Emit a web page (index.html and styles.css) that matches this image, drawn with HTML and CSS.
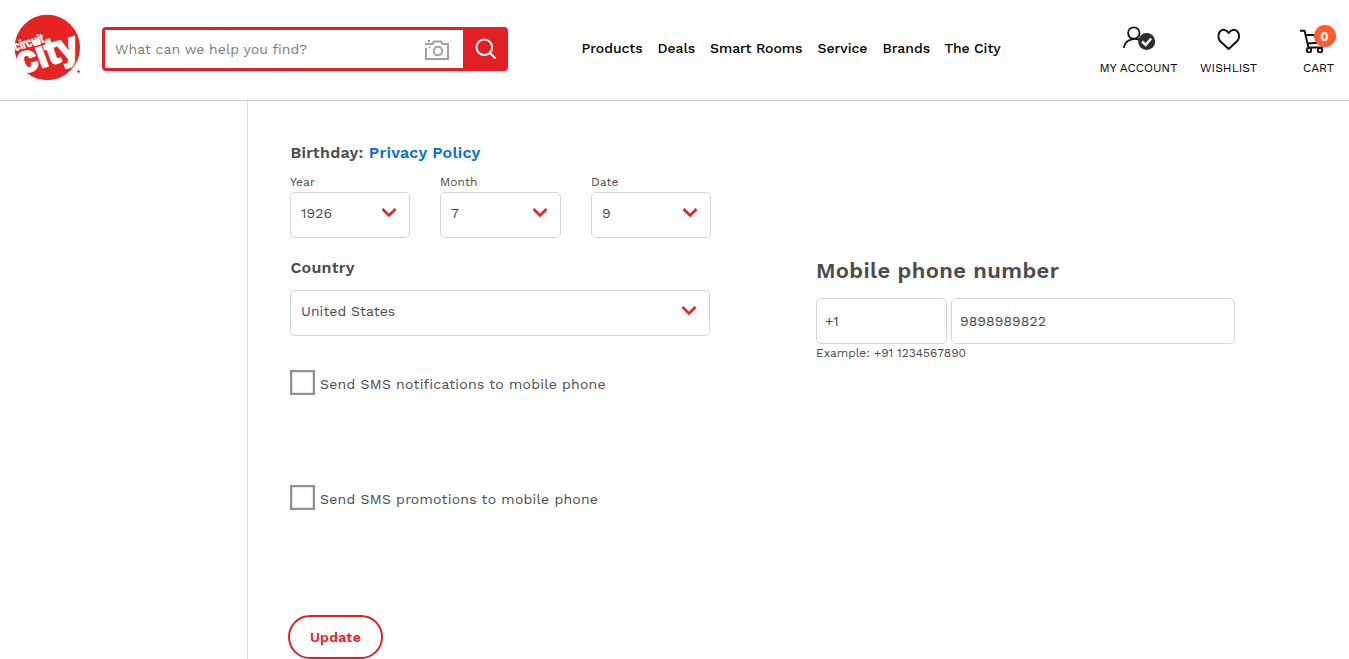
FILE: index.html
```html
<!DOCTYPE html>
<html lang="en">
<head>
<meta charset="utf-8">
<title>Circuit City - My Account</title>
<link rel="stylesheet" href="styles.css">
</head>
<body>
<header class="header">
  <svg class="logo" viewBox="0 0 68 68" role="img" aria-label="Circuit City">
    <circle cx="33.300" cy="33.500" r="32.700" fill="#e52321"/>
    <g fill="#fff" stroke="#fff" font-family="Liberation Sans, sans-serif" font-weight="700">
      <text transform="translate(1.500 37) rotate(-17) scale(.8 1)" font-size="13" stroke-width=".6" textLength="38" lengthAdjust="spacingAndGlyphs">circuit</text>
      <text transform="translate(7 60) rotate(-17) skewX(3) scale(.9 1)" font-size="38" stroke-width="2" textLength="70" lengthAdjust="spacingAndGlyphs">city</text>
    </g>
    <circle cx="64.500" cy="57.500" r="1.300" fill="#e52321"/>
  </svg>
  <form class="search">
    <input class="search-input" type="text" placeholder="What can we help you find?">
    <svg class="camera" viewBox="0 0 26 22" fill="none" stroke="#a0a0a0" stroke-width="2">
      <path d="M2 8V19H24V4H19L17 1.500H10L8.500 4H1M3.500 1H6M5 7.500H6.500"/><circle cx="14" cy="11" r="4.200"/>
    </svg>
    <button class="search-button" type="button" aria-label="Search">
      <svg viewBox="0 0 22 22" fill="none" stroke="#fff" stroke-width="2" stroke-linecap="round"><circle cx="9.300" cy="9.300" r="7.800"/><path d="M15 15L20 20"/></svg>
    </button>
  </form>
  <nav class="nav">
    <a>Products</a><a>Deals</a><a>Smart Rooms</a><a>Service</a><a>Brands</a><a>The City</a>
  </nav>
  <div class="actions">
    <a class="action">
      <svg viewBox="0 0 34 28" fill="none" stroke="#111" stroke-width="1.800"><circle cx="11.800" cy="8" r="5.700"/><path d="M1.800 23C3 13 16 12 20 17"/><circle cx="24.700" cy="16.500" r="8.500" fill="#2d2d2d" stroke="none"/><path d="M20.200 16.500L23.700 20L29.200 13.500" stroke="#fff" stroke-width="2.500"/></svg>
      <span>MY ACCOUNT</span>
    </a>
    <a class="action">
      <svg viewBox="0 0 34 28" fill="none" stroke="#111" stroke-width="2" stroke-linejoin="round"><path d="M16.700 24L8.500 16.500C6 14 5.500 9 8.200 6.200C11 4 14.500 4.500 16.700 8C19 4.500 22.500 4 25.200 6.200C28 9 27.500 14 24.800 16.500Z"/></svg>
      <span>WISHLIST</span>
    </a>
    <a class="action cart">
      <svg viewBox="0 0 34 28" fill="none" stroke="#111" stroke-width="1.900"><path d="M0 5.700H4.500L8.500 22.500H23M5.500 10H23L20.500 17.500L8 18.500"/><circle cx="9" cy="25.200" r="2.200"/><circle cx="20" cy="25.200" r="2.200"/></svg>
      <b class="badge">0</b>
      <span>CART</span>
    </a>
  </div>
</header>
<main class="page">
  <aside class="sidebar"></aside>
  <section class="profile">
    <h2 class="heading">Birthday: <a class="link">Privacy Policy</a></h2>
    <div class="birthday">
      <label class="field">Year<span class="select">1926<svg class="chevron" viewBox="0 0 16 11"><path d="M1.500 2L8 8.500L14.500 2"/></svg></span></label>
      <label class="field">Month<span class="select">7<svg class="chevron" viewBox="0 0 16 11"><path d="M1.500 2L8 8.500L14.500 2"/></svg></span></label>
      <label class="field">Date<span class="select">9<svg class="chevron" viewBox="0 0 16 11"><path d="M1.500 2L8 8.500L14.500 2"/></svg></span></label>
    </div>
    <h2 class="heading country">Country</h2>
    <div class="select">United States<svg class="chevron" viewBox="0 0 16 11"><path d="M1.500 2L8 8.500L14.500 2"/></svg></div>
    <label class="check"><i class="box"></i><span>Send SMS notifications to mobile phone</span></label>
    <label class="check promotions"><i class="box"></i><span>Send SMS promotions to mobile phone</span></label>
    <button class="update" type="button">Update</button>
  </section>
  <section class="mobile">
    <h1 class="title">Mobile phone number</h1>
    <div class="phone"><input class="input" value="+1"><input class="input" value="9898989822"></div>
    <p class="example">Example: +91 1234567890</p>
  </section>
</main>
</body>
</html>
```

FILE: styles.css
```css
* { box-sizing: border-box; }
body { margin: 0; height: 659px; overflow: hidden; background: #fff; color: #4b4b4b; font: 14px "Work Sans", Inter, "Liberation Sans", sans-serif; }
h1, h2, p { margin: 0; }
svg { display: block; }
.header { height: 101px; border-bottom: 1px solid #ccc; display: flex; align-items: flex-start; }
.logo { width: 68px; height: 68px; margin: 14px 0 0 14px; flex: none; overflow: visible; }
.search { width: 406px; height: 44px; margin: 27px 0 0 20px; border: 3px solid #e41e25; border-radius: 4px; display: flex; align-items: center; background: #fff; flex: none; }
.search-input { width: 320px; height: 38px; border: 0; padding: 0 0 0 10px; background: none; font: inherit; letter-spacing: .04px; outline: 0; }
.search-input::placeholder { color: #7d7d7d; opacity: 1; }
.camera { width: 26px; height: 22px; margin: 3px 13px 0 -1px; }
.search-button { align-self: stretch; flex: 1; border: 0; padding: 0 0 0 12px; background: #e41e25; }
.search-button svg { width: 22px; height: 22px; }
.nav { display: grid; grid-template-columns: 76px 52.5px 107.5px 65px 62px 57px; margin: 40px 0 0 73.5px; color: #000; font-size: 14px; font-weight: 500; line-height: 17px; letter-spacing: -.04px; white-space: nowrap; }
.actions { display: grid; grid-template-columns: 90px 90px 90px; margin: 25px 0 0 92px; color: #000; font-size: 12px; }
.action { position: relative; display: flex; flex-direction: column; align-items: center; white-space: nowrap; }
.action svg { width: 34px; height: 28px; margin-bottom: 9px; }
.action span { line-height: 13px; }
.cart svg { margin-right: 3px; }
.badge { position: absolute; left: 40px; top: 0; width: 22px; height: 22px; border-radius: 50%; background: #ff5b2d; color: #fff; font-size: 13px; font-weight: 700; line-height: 24px; text-align: center; }
.page { display: flex; height: 558px; }
.sidebar { width: 248px; border-right: 1px solid #ddd; }
.profile { width: 420px; margin: 42px 0 0 42px; }
.heading { padding-left: .4px; font-size: 16px; font-weight: 600; line-height: 20px; letter-spacing: .25px; }
.link { color: #0870d1; }
.birthday { display: grid; grid-template-columns: 120px 121px 120px; gap: 30px; margin-top: 12px; }
.field { font-size: 12px; line-height: 14px; letter-spacing: .1px; }
.select { display: flex; justify-content: space-between; height: 46px; border: 1px solid #d5d5d5; border-radius: 5px; padding: 11px 12px 0 10px; font-size: 14px; line-height: 18px; letter-spacing: .05px; }
.field .select { margin-top: 3px; }
.chevron { width: 16px; height: 11px; margin: 3px 0 0; fill: none; stroke: #e52328; stroke-width: 2.6; }
.country { margin: 20px 0 12px; }
.check { display: flex; height: 25px; margin-top: 34px; font-size: 14px; line-height: 29px; letter-spacing: .24px; white-space: nowrap; }
.box { width: 25px; height: 25px; border: 2px solid #919191; box-shadow: inset 0 0 2px #999; margin-right: 5px; }
.promotions { margin-top: 90px; }
.update { display: block; width: 95px; height: 44px; margin: 105px 0 0 -2px; border: 2px solid #e41e25; border-radius: 22px; background: #fff; color: #e41e25; font: 600 14px "Work Sans", Inter, sans-serif; letter-spacing: .3px; padding: 0; }
.mobile { width: 419px; margin: 157px 0 0 106px; }
.title { font-size: 22px; font-weight: 600; line-height: 26px; letter-spacing: .35px; white-space: nowrap; }
.phone { display: grid; grid-template-columns: 131px 284px; gap: 4px; margin-top: 14px; }
.input { width: 100%; height: 46px; border: 1px solid #d5d5d5; border-radius: 5px; padding: 0 8px; color: #4b4b4b; font: 14px "Work Sans", Inter, sans-serif; letter-spacing: .05px; }
.example { font-size: 12px; line-height: 18px; white-space: nowrap; }
```
